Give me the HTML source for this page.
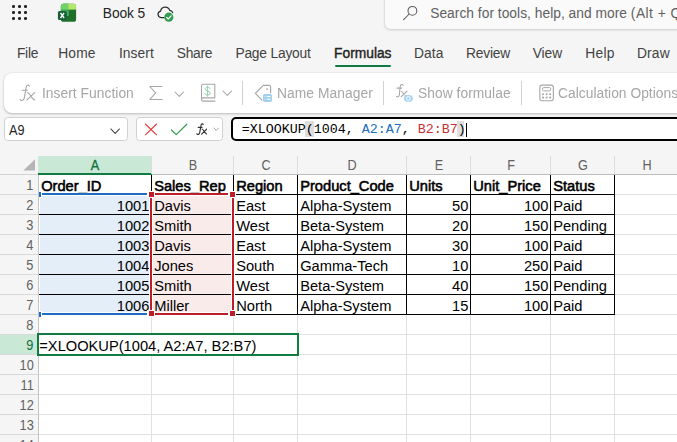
<!DOCTYPE html>
<html><head><meta charset="utf-8"><title>Book 5</title><style>
*{box-sizing:border-box;margin:0;padding:0}
html,body{width:677px;height:442px;overflow:hidden;background:#f5f5f5;font-family:"Liberation Sans",sans-serif;}
.a{position:absolute;white-space:pre;line-height:1}
.t{position:absolute;white-space:pre;line-height:1;font-size:13.5px;color:#242424}
.g{color:#a6a6a6}
.cell{position:absolute;white-space:pre;font-size:14.67px;line-height:1;color:#000;transform:scaleY(1.055);transform-origin:0 84.65%}
.b{-webkit-text-stroke:0.55px #000}
.hl{position:absolute;height:1px;background:#e1e1e1}
.vl{position:absolute;width:1px;background:#e1e1e1}
.bk{background:#000}
</style></head><body>
<div class="a" style="left:12.1px;top:5.2px;width:2.6px;height:2.6px;border-radius:50%;background:#242424"></div>
<div class="a" style="left:18.1px;top:5.2px;width:2.6px;height:2.6px;border-radius:50%;background:#242424"></div>
<div class="a" style="left:24.2px;top:5.2px;width:2.6px;height:2.6px;border-radius:50%;background:#242424"></div>
<div class="a" style="left:12.1px;top:11.2px;width:2.6px;height:2.6px;border-radius:50%;background:#242424"></div>
<div class="a" style="left:18.1px;top:11.2px;width:2.6px;height:2.6px;border-radius:50%;background:#242424"></div>
<div class="a" style="left:24.2px;top:11.2px;width:2.6px;height:2.6px;border-radius:50%;background:#242424"></div>
<div class="a" style="left:12.1px;top:17.2px;width:2.6px;height:2.6px;border-radius:50%;background:#242424"></div>
<div class="a" style="left:18.1px;top:17.2px;width:2.6px;height:2.6px;border-radius:50%;background:#242424"></div>
<div class="a" style="left:24.2px;top:17.2px;width:2.6px;height:2.6px;border-radius:50%;background:#242424"></div>
<svg class="a" style="left:57px;top:3px" width="21" height="20" viewBox="0 0 21 20">
<defs><clipPath id="xc"><rect x="3.9" y="0.8" width="15.2" height="18" rx="2.6"/></clipPath></defs>
<g clip-path="url(#xc)"><rect x="3" y="0" width="17" height="20" fill="#1f6e2b"/>
<rect x="3" y="0" width="8.8" height="13" fill="#3fae58"/>
<rect x="3" y="0" width="8.2" height="6.7" fill="#6fd166"/>
<rect x="11.2" y="0" width="9" height="6.7" fill="#b2e96d"/>
<rect x="3" y="6.7" width="17" height="0.6" fill="#2d8a43" opacity="0.5"/></g>
<rect x="0.9" y="7.9" width="8.9" height="9.1" rx="1.6" fill="#17603a"/>
<path d="M3.5 9.9l3.6 5.1M7.1 9.9l-3.6 5.1" stroke="#fff" stroke-width="1.35" fill="none"/>
</svg>
<div class="t" style="top:7.02px;font-size:13.8px;left:102.80px;letter-spacing:-0.092px;">Book 5</div>
<svg class="a" style="left:156px;top:3.7px" width="20" height="19" viewBox="0 0 20 19">
<path d="M8 13.6H5.1a3.3 3.3 0 0 1-.5-6.5 4.7 4.7 0 0 1 9.1-.7 3.1 3.1 0 0 1 3 2.2" fill="none" stroke="#2b2b2b" stroke-width="1.2" stroke-linecap="round"/>
<circle cx="12.8" cy="13.2" r="4.6" fill="#2f9e4f"/>
<path d="M10.6 13.4l1.6 1.6 2.9-3.2" fill="none" stroke="#fff" stroke-width="1.25" stroke-linecap="round" stroke-linejoin="round"/>
</svg>
<div class="a" style="left:385px;top:-10px;width:320px;height:38.5px;background:#fafafa;border-radius:5px;box-shadow:0 0 2px rgba(0,0,0,.18),0 1px 3px rgba(0,0,0,.12)"></div>
<svg class="a" style="left:403px;top:5px" width="16" height="16" viewBox="0 0 16 16"><circle cx="9.4" cy="5.8" r="4.4" fill="none" stroke="#5c5c5c" stroke-width="1.05"/><path d="M6.2 9L0.6 14.6" stroke="#5c5c5c" stroke-width="1.05" stroke-linecap="round"/></svg>
<div class="t" style="top:6.92px;font-size:13.8px;left:430.20px;color:#616161;letter-spacing:0.015px;">Search for tools, help, and more <span style="letter-spacing:0.45px">(Alt + Q)</span></div>
<div class="t" style="top:47.32px;font-size:13.8px;left:17.00px;color:#424242;letter-spacing:-0.305px;">File</div>
<div class="t" style="top:47.32px;font-size:13.8px;left:58.20px;color:#424242;letter-spacing:0.172px;">Home</div>
<div class="t" style="top:47.32px;font-size:13.8px;left:118.90px;color:#424242;letter-spacing:0.100px;">Insert</div>
<div class="t" style="top:47.32px;font-size:13.8px;left:176.70px;color:#424242;letter-spacing:-0.243px;">Share</div>
<div class="t" style="top:47.32px;font-size:13.8px;left:235.40px;color:#424242;letter-spacing:-0.197px;">Page Layout</div>
<div class="t" style="top:47.32px;font-size:13.8px;left:414.00px;color:#424242;letter-spacing:0.090px;">Data</div>
<div class="t" style="top:47.32px;font-size:13.8px;left:466.10px;color:#424242;letter-spacing:-0.208px;">Review</div>
<div class="t" style="top:47.32px;font-size:13.8px;left:532.70px;color:#424242;letter-spacing:-0.064px;">View</div>
<div class="t" style="top:47.32px;font-size:13.8px;left:585.30px;color:#424242;letter-spacing:0.256px;">Help</div>
<div class="t" style="top:47.32px;font-size:13.8px;left:636.90px;color:#424242;letter-spacing:0.174px;">Draw</div>
<div class="t" style="top:47.32px;font-size:13.8px;left:334.10px;color:#242424;letter-spacing:-0.013px;-webkit-text-stroke:0.4px #242424;">Formulas</div>
<div class="a" style="left:335px;top:65px;width:56px;height:2px;border-radius:1px;background:#107c41"></div>
<div class="a" style="left:4px;top:73px;width:700px;height:39.5px;background:#fff;border-radius:8px;box-shadow:0 0 2px rgba(0,0,0,.14),0 1px 2px rgba(0,0,0,.13),0 2px 3px rgba(0,0,0,.06)"></div>
<div class="t" style="top:87.02px;font-size:13.8px;left:41.60px;color:#a6a6a6;letter-spacing:0.038px;will-change:transform;">Insert Function</div>
<svg class="a" style="left:149px;top:85px" width="15" height="16" viewBox="0 0 15 16"><path d="M12.9 1.5H0.8l5.9 6.4-5.9 6.5H13.1" fill="none" stroke="#a6a6a6" stroke-width="1.05" stroke-linejoin="round" stroke-linecap="round"/></svg>
<svg class="a" style="left:173.8px;top:90.6px" width="10.6" height="6.4" viewBox="-1 -1 10.6 6.4"><path d="M0 0L4.3 4.4L8.6 0" fill="none" stroke="#a6a6a6" stroke-width="1.05" stroke-linecap="round" stroke-linejoin="round"/></svg>
<svg class="a" style="left:19px;top:84px" width="17.0" height="18.0" viewBox="0 0 17 18"><g fill="none" stroke="#a6a6a6" stroke-width="1.10" stroke-linecap="round" stroke-linejoin="round"><path d="M10.3 2.2C9.8 0.7 7.6 0.7 7.2 3.2L5.3 13.8C4.9 16.4 2.6 17.2 1.2 15.6"/><path d="M3.2 6.3H8.6"/><path d="M8.6 8.6C10.5 8.8 13.5 15.8 15.6 15.9M15.7 8.6L8 15.9"/></g></svg>
<svg class="a" style="left:200px;top:83px" width="17" height="20" viewBox="0 0 17 20">
<path d="M1.5 15.6V2.9A1.6 1.6 0 0 1 3.1 1.3H14.8V14.9H3.2a1.6 1.6 0 0 0-1.7 1.6v0a1.6 1.6 0 0 0 1.7 1.6H15" fill="none" stroke="#a6a6a6" stroke-width="1.1" stroke-linejoin="round" stroke-linecap="round"/>
<path transform="translate(-0.7,0)" d="M8.3 2.9V13.3M10.9 5.4C10.5 3.9 5.8 3.6 5.8 6.1C5.8 8.3 11 7.7 11 10.2C11 12.6 6.1 12.5 5.5 10.8" fill="none" stroke="#93d3aa" stroke-width="1" stroke-linecap="round"/></svg>
<svg class="a" style="left:222.2px;top:90.4px" width="10.6" height="6.4" viewBox="-1 -1 10.6 6.4"><path d="M0 0L4.3 4.4L8.6 0" fill="none" stroke="#a6a6a6" stroke-width="1.05" stroke-linecap="round" stroke-linejoin="round"/></svg>
<div class="a" style="left:242px;top:81px;width:1px;height:24px;background:#d1d1d1"></div>
<svg class="a" style="left:254px;top:83px" width="20" height="20" viewBox="0 0 20 20">
<path d="M16.6 9.6V3.9A1.5 1.5 0 0 0 15.1 2.4H9.2L1.4 10.4 7.9 17.1" fill="none" stroke="#a6a6a6" stroke-width="1.15" stroke-linejoin="round" stroke-linecap="round"/>
<rect x="12.3" y="5.3" width="1.5" height="1.5" fill="#a6a6a6"/>
<rect x="9" y="11" width="9" height="7.9" rx="1.7" fill="#9fd0f0"/>
<path d="M12.6 13.5h4M12.6 16.3h4" stroke="#fff" stroke-width="1.1"/><path d="M10.4 13.5h1M10.4 16.3h1" stroke="#d8ecfa" stroke-width="1.1"/></svg>
<div class="t" style="top:87.02px;font-size:13.8px;left:277.20px;color:#a6a6a6;letter-spacing:0.059px;will-change:transform;">Name Manager</div>
<div class="a" style="left:383px;top:81px;width:1px;height:24px;background:#d1d1d1"></div>
<svg class="a" style="left:395px;top:83px" width="20" height="20" viewBox="0 0 20 20"><g fill="none" stroke="#a6a6a6" stroke-width="1.05" stroke-linecap="round" stroke-linejoin="round"><path d="M8.1 2.3C7.6 1.1 5.5 1.1 5.2 3.2L4.4 11.4C4.2 13.8 2.6 14.3 1.5 13.5"/><path d="M1.9 5.1H6.7"/><path d="M6.4 8.4C7.6 8.5 10.2 13.4 11.7 13.5M12 8.1L6.1 13.8"/></g>
<ellipse cx="13.4" cy="15.4" rx="4.5" ry="3.4" fill="#a6d3f1"/><circle cx="13.4" cy="15.4" r="1.9" fill="none" stroke="#fff" stroke-width="0.95"/></svg>
<div class="t" style="top:87.02px;font-size:13.8px;left:417.80px;color:#a6a6a6;letter-spacing:0.045px;will-change:transform;">Show formulae</div>
<div class="a" style="left:521px;top:81px;width:1px;height:24px;background:#d1d1d1"></div>
<svg class="a" style="left:539px;top:84px" width="16" height="18" viewBox="0 0 16 18">
<rect x="0.85" y="1.1" width="13.5" height="15.6" rx="2.2" fill="none" stroke="#a6a6a6" stroke-width="1.1"/>
<rect x="3.5" y="3.6" width="8.2" height="3.3" rx="1.2" fill="none" stroke="#a6a6a6" stroke-width="1"/>
<g fill="#a6a6a6"><circle cx="4.0" cy="10.2" r="1.05"/><circle cx="7.6" cy="10.2" r="1.05"/><circle cx="11.2" cy="10.2" r="1.05"/>
<circle cx="4.0" cy="13.6" r="1.05"/><circle cx="7.6" cy="13.6" r="1.05"/><circle cx="11.2" cy="13.6" r="1.05"/></g></svg>
<div class="t" style="top:87.02px;font-size:13.8px;left:557.60px;color:#a6a6a6;letter-spacing:0.027px;will-change:transform;">Calculation Options</div>
<div class="a" style="left:4.3px;top:117px;width:123.4px;height:23.7px;background:#fff;border:1px solid #d1d1d1;border-radius:3.5px"></div>
<div class="t" style="top:122.75px;font-size:14px;left:8.90px;color:#242424;transform:scaleX(0.905);transform-origin:0 0;">A9</div>
<svg class="a" style="left:109.9px;top:127.9px" width="10.3" height="6.5" viewBox="-1 -1 10.3 6.5"><path d="M0 0L4.15 4.5L8.3 0" fill="none" stroke="#2b2b2b" stroke-width="1.1" stroke-linecap="round" stroke-linejoin="round"/></svg>
<div class="a" style="left:136.3px;top:117px;width:87.0px;height:23.7px;background:#fff;border:1px solid #d1d1d1;border-radius:3.5px"></div>
<svg class="a" style="left:144px;top:122.5px" width="14" height="13" viewBox="0 0 14 13"><path d="M1.4 1l11.2 10.8M12.6 1L1.4 11.8" stroke="#ee3036" stroke-width="1.05" stroke-linecap="round"/></svg>
<svg class="a" style="left:170px;top:122.6px" width="18" height="13" viewBox="0 0 18 13"><path d="M1.4 7l4.8 4.6L16.8 1.2" fill="none" stroke="#2d9d4a" stroke-width="1.2" stroke-linecap="round" stroke-linejoin="round"/></svg>
<svg class="a" style="left:195.6px;top:122.8px" width="11.9" height="12.6" viewBox="0 0 17 18"><g fill="none" stroke="#333" stroke-width="1.64" stroke-linecap="round" stroke-linejoin="round"><path d="M10.3 2.2C9.8 0.7 7.6 0.7 7.2 3.2L5.3 13.8C4.9 16.4 2.6 17.2 1.2 15.6"/><path d="M3.2 6.3H8.6"/><path d="M8.6 8.6C10.5 8.8 13.5 15.8 15.6 15.9M15.7 8.6L8 15.9"/></g></svg>
<svg class="a" style="left:212.6px;top:127.2px" width="6.6" height="4.4" viewBox="-1 -1 6.6 4.4"><path d="M0 0L2.3 2.4L4.6 0" fill="none" stroke="#a8a8a8" stroke-width="1" stroke-linecap="round" stroke-linejoin="round"/></svg>
<div class="a" style="left:231px;top:117px;width:470px;height:24px;background:#fff;border:2px solid #000;border-radius:5px"></div>
<div class="a" style="left:305.3px;top:121.3px;width:8.4px;height:15.7px;background:#dedede"></div>
<div class="a" style="left:457.3px;top:121.3px;width:6.8px;height:15.7px;background:#dedede"></div>
<div class="a" style="left:241.8px;top:123.48px;font-size:13.33px;color:#000;font-family:'Liberation Mono',monospace">=XLOOKUP(1004, <span style="color:#1b6ec2">A2:A7</span>, <span style="color:#c43238">B2:B7</span>)</div>
<div class="a" style="left:466px;top:122.5px;width:1px;height:14px;background:#000"></div>
<div class="a" style="left:39px;top:175px;width:640px;height:270px;background:#fff"></div>
<div class="a" style="left:38px;top:156px;width:114px;height:19px;background:#cae8d6"></div>
<div class="a" style="left:38px;top:173px;width:114px;height:2px;background:#107c41"></div>
<div class="a" style="left:0;top:174px;width:38px;height:1px;background:#d4d4d4"></div>
<div class="a" style="left:152px;top:174px;width:530px;height:1px;background:#bdbdbd"></div>
<div class="vl" style="left:151px;top:156px;height:18px;background:#dcdcdc"></div>
<div class="vl" style="left:233px;top:156px;height:18px;background:#dcdcdc"></div>
<div class="vl" style="left:297px;top:156px;height:18px;background:#dcdcdc"></div>
<div class="vl" style="left:406px;top:156px;height:18px;background:#dcdcdc"></div>
<div class="vl" style="left:470px;top:156px;height:18px;background:#dcdcdc"></div>
<div class="vl" style="left:550px;top:156px;height:18px;background:#dcdcdc"></div>
<div class="vl" style="left:614px;top:156px;height:18px;background:#dcdcdc"></div>
<div class="vl" style="left:678px;top:156px;height:18px;background:#dcdcdc"></div>
<svg class="a" style="left:23px;top:159px" width="12" height="12" viewBox="0 0 12 12"><path d="M12 0.3V11.6H0.4Z" fill="#b5b5b5"/></svg>
<div class="a" style="left:75.4px;width:40px;text-align:center;top:158.82px;font-size:13.33px;color:#0f703b;transform:scale(0.95,1.08);transform-origin:50% 84.65%;-webkit-text-stroke:0.3px #0f703b">A</div>
<div class="a" style="left:172.5px;width:40px;text-align:center;top:158.82px;font-size:13.33px;color:#616161;transform:scale(0.95,1.08);transform-origin:50% 84.65%">B</div>
<div class="a" style="left:245.5px;width:40px;text-align:center;top:158.82px;font-size:13.33px;color:#616161;transform:scale(0.95,1.08);transform-origin:50% 84.65%">C</div>
<div class="a" style="left:332.0px;width:40px;text-align:center;top:158.82px;font-size:13.33px;color:#616161;transform:scale(0.95,1.08);transform-origin:50% 84.65%">D</div>
<div class="a" style="left:418.5px;width:40px;text-align:center;top:158.82px;font-size:13.33px;color:#616161;transform:scale(0.95,1.08);transform-origin:50% 84.65%">E</div>
<div class="a" style="left:490.5px;width:40px;text-align:center;top:158.82px;font-size:13.33px;color:#616161;transform:scale(0.95,1.08);transform-origin:50% 84.65%">F</div>
<div class="a" style="left:562.5px;width:40px;text-align:center;top:158.82px;font-size:13.33px;color:#616161;transform:scale(0.95,1.08);transform-origin:50% 84.65%">G</div>
<div class="a" style="left:626.5px;width:40px;text-align:center;top:158.82px;font-size:13.33px;color:#616161;transform:scale(0.95,1.08);transform-origin:50% 84.65%">H</div>
<div class="vl" style="left:38px;top:175px;height:270px;background:#c4c4c4"></div>
<div class="a" style="left:0;top:334px;width:38px;height:21px;background:#cae8d6"></div>
<div class="hl" style="left:0;top:194px;width:38px;background:#d9d9d9"></div>
<div class="hl" style="left:39px;top:194px;width:640px"></div>
<div class="hl" style="left:0;top:214px;width:38px;background:#d9d9d9"></div>
<div class="hl" style="left:39px;top:214px;width:640px"></div>
<div class="hl" style="left:0;top:234px;width:38px;background:#d9d9d9"></div>
<div class="hl" style="left:39px;top:234px;width:640px"></div>
<div class="hl" style="left:0;top:254px;width:38px;background:#d9d9d9"></div>
<div class="hl" style="left:39px;top:254px;width:640px"></div>
<div class="hl" style="left:0;top:274px;width:38px;background:#d9d9d9"></div>
<div class="hl" style="left:39px;top:274px;width:640px"></div>
<div class="hl" style="left:0;top:294px;width:38px;background:#d9d9d9"></div>
<div class="hl" style="left:39px;top:294px;width:640px"></div>
<div class="hl" style="left:0;top:314px;width:38px;background:#d9d9d9"></div>
<div class="hl" style="left:39px;top:314px;width:640px"></div>
<div class="hl" style="left:0;top:334px;width:38px;background:#d9d9d9"></div>
<div class="hl" style="left:39px;top:334px;width:640px"></div>
<div class="hl" style="left:0;top:354px;width:38px;background:#d9d9d9"></div>
<div class="hl" style="left:39px;top:354px;width:640px"></div>
<div class="hl" style="left:0;top:374px;width:38px;background:#d9d9d9"></div>
<div class="hl" style="left:39px;top:374px;width:640px"></div>
<div class="hl" style="left:0;top:394px;width:38px;background:#d9d9d9"></div>
<div class="hl" style="left:39px;top:394px;width:640px"></div>
<div class="hl" style="left:0;top:414px;width:38px;background:#d9d9d9"></div>
<div class="hl" style="left:39px;top:414px;width:640px"></div>
<div class="hl" style="left:0;top:434px;width:38px;background:#d9d9d9"></div>
<div class="hl" style="left:39px;top:434px;width:640px"></div>
<div class="hl" style="left:0;top:454px;width:38px;background:#d9d9d9"></div>
<div class="hl" style="left:39px;top:454px;width:640px"></div>
<div class="vl" style="left:151px;top:175px;height:270px"></div>
<div class="vl" style="left:233px;top:175px;height:270px"></div>
<div class="vl" style="left:297px;top:175px;height:270px"></div>
<div class="vl" style="left:406px;top:175px;height:270px"></div>
<div class="vl" style="left:470px;top:175px;height:270px"></div>
<div class="vl" style="left:550px;top:175px;height:270px"></div>
<div class="vl" style="left:614px;top:175px;height:270px"></div>
<div class="vl" style="left:678px;top:175px;height:270px"></div>
<div class="a" style="right:643.1px;top:178.62px;font-size:13.33px;color:#616161;transform:scale(0.96,1.08);transform-origin:100% 84.65%">1</div>
<div class="a" style="right:643.1px;top:198.62px;font-size:13.33px;color:#616161;transform:scale(0.96,1.08);transform-origin:100% 84.65%">2</div>
<div class="a" style="right:643.1px;top:218.62px;font-size:13.33px;color:#616161;transform:scale(0.96,1.08);transform-origin:100% 84.65%">3</div>
<div class="a" style="right:643.1px;top:238.62px;font-size:13.33px;color:#616161;transform:scale(0.96,1.08);transform-origin:100% 84.65%">4</div>
<div class="a" style="right:643.1px;top:258.62px;font-size:13.33px;color:#616161;transform:scale(0.96,1.08);transform-origin:100% 84.65%">5</div>
<div class="a" style="right:643.1px;top:278.62px;font-size:13.33px;color:#616161;transform:scale(0.96,1.08);transform-origin:100% 84.65%">6</div>
<div class="a" style="right:643.1px;top:298.62px;font-size:13.33px;color:#616161;transform:scale(0.96,1.08);transform-origin:100% 84.65%">7</div>
<div class="a" style="right:643.1px;top:318.62px;font-size:13.33px;color:#616161;transform:scale(0.96,1.08);transform-origin:100% 84.65%">8</div>
<div class="a" style="right:643.1px;top:338.62px;font-size:13.33px;color:#0f703b;transform:scale(0.96,1.08);transform-origin:100% 84.65%">9</div>
<div class="a" style="right:643.1px;top:358.62px;font-size:13.33px;color:#616161;transform:scale(0.96,1.08);transform-origin:100% 84.65%">10</div>
<div class="a" style="right:643.1px;top:378.62px;font-size:13.33px;color:#616161;transform:scale(0.96,1.08);transform-origin:100% 84.65%">11</div>
<div class="a" style="right:643.1px;top:398.62px;font-size:13.33px;color:#616161;transform:scale(0.96,1.08);transform-origin:100% 84.65%">12</div>
<div class="a" style="right:643.1px;top:418.62px;font-size:13.33px;color:#616161;transform:scale(0.96,1.08);transform-origin:100% 84.65%">13</div>
<div class="a" style="right:643.1px;top:438.62px;font-size:13.33px;color:#616161;transform:scale(0.96,1.08);transform-origin:100% 84.65%">14</div>
<div class="a" style="left:40px;top:196px;width:109px;height:116px;background:#e3eef8"></div>
<div class="a" style="left:153px;top:196px;width:77.5px;height:116px;background:#f9ebea"></div>
<div class="hl bk" style="left:39px;top:194px;width:576px"></div>
<div class="hl bk" style="left:39px;top:214px;width:576px"></div>
<div class="hl bk" style="left:39px;top:234px;width:576px"></div>
<div class="hl bk" style="left:39px;top:254px;width:576px"></div>
<div class="hl bk" style="left:39px;top:274px;width:576px"></div>
<div class="hl bk" style="left:39px;top:294px;width:576px"></div>
<div class="hl bk" style="left:39px;top:314px;width:576px"></div>
<div class="vl bk" style="left:151px;top:175px;height:140px"></div>
<div class="vl bk" style="left:233px;top:175px;height:140px"></div>
<div class="vl bk" style="left:297px;top:175px;height:140px"></div>
<div class="vl bk" style="left:406px;top:175px;height:140px"></div>
<div class="vl bk" style="left:470px;top:175px;height:140px"></div>
<div class="vl bk" style="left:550px;top:175px;height:140px"></div>
<div class="vl bk" style="left:614px;top:175px;height:140px"></div>
<div class="cell b" style="left:41.2px;top:178.73px">Order_ID</div>
<div class="cell b" style="left:154.2px;top:178.73px">Sales_Rep</div>
<div class="cell b" style="left:236.2px;top:178.73px">Region</div>
<div class="cell b" style="left:300.2px;top:178.73px">Product_Code</div>
<div class="cell b" style="left:409.2px;top:178.73px">Units</div>
<div class="cell b" style="left:473.2px;top:178.73px">Unit_Price</div>
<div class="cell b" style="left:553.2px;top:178.73px">Status</div>
<div class="cell" style="right:527.6px;top:198.73px">1001</div>
<div class="cell" style="left:154.2px;top:198.73px">Davis</div>
<div class="cell" style="left:236.2px;top:198.73px">East</div>
<div class="cell" style="left:300.2px;top:198.73px">Alpha-System</div>
<div class="cell" style="right:208.6px;top:198.73px">50</div>
<div class="cell" style="right:128.6px;top:198.73px">100</div>
<div class="cell" style="left:553.2px;top:198.73px">Paid</div>
<div class="cell" style="right:527.6px;top:218.73px">1002</div>
<div class="cell" style="left:154.2px;top:218.73px">Smith</div>
<div class="cell" style="left:236.2px;top:218.73px">West</div>
<div class="cell" style="left:300.2px;top:218.73px">Beta-System</div>
<div class="cell" style="right:208.6px;top:218.73px">20</div>
<div class="cell" style="right:128.6px;top:218.73px">150</div>
<div class="cell" style="left:553.2px;top:218.73px">Pending</div>
<div class="cell" style="right:527.6px;top:238.73px">1003</div>
<div class="cell" style="left:154.2px;top:238.73px">Davis</div>
<div class="cell" style="left:236.2px;top:238.73px">East</div>
<div class="cell" style="left:300.2px;top:238.73px">Alpha-System</div>
<div class="cell" style="right:208.6px;top:238.73px">30</div>
<div class="cell" style="right:128.6px;top:238.73px">100</div>
<div class="cell" style="left:553.2px;top:238.73px">Paid</div>
<div class="cell" style="right:527.6px;top:258.73px">1004</div>
<div class="cell" style="left:154.2px;top:258.73px">Jones</div>
<div class="cell" style="left:236.2px;top:258.73px">South</div>
<div class="cell" style="left:300.2px;top:258.73px">Gamma-Tech</div>
<div class="cell" style="right:208.6px;top:258.73px">10</div>
<div class="cell" style="right:128.6px;top:258.73px">250</div>
<div class="cell" style="left:553.2px;top:258.73px">Paid</div>
<div class="cell" style="right:527.6px;top:278.73px">1005</div>
<div class="cell" style="left:154.2px;top:278.73px">Smith</div>
<div class="cell" style="left:236.2px;top:278.73px">West</div>
<div class="cell" style="left:300.2px;top:278.73px">Beta-System</div>
<div class="cell" style="right:208.6px;top:278.73px">40</div>
<div class="cell" style="right:128.6px;top:278.73px">150</div>
<div class="cell" style="left:553.2px;top:278.73px">Pending</div>
<div class="cell" style="right:527.6px;top:298.73px">1006</div>
<div class="cell" style="left:154.2px;top:298.73px">Miller</div>
<div class="cell" style="left:236.2px;top:298.73px">North</div>
<div class="cell" style="left:300.2px;top:298.73px">Alpha-System</div>
<div class="cell" style="right:208.6px;top:298.73px">15</div>
<div class="cell" style="right:128.6px;top:298.73px">100</div>
<div class="cell" style="left:553.2px;top:298.73px">Paid</div>
<div class="a" style="left:42px;top:193px;width:105px;height:2px;background:#1b6ec2"></div>
<div class="a" style="left:42px;top:313px;width:105px;height:2px;background:#1b6ec2"></div>
<div class="a" style="left:39px;top:191px;width:3px;height:7px;background:#fff"></div>
<div class="a" style="left:39px;top:192px;width:2px;height:5px;background:#1b6ec2"></div>
<div class="a" style="left:39px;top:311px;width:3px;height:7px;background:#fff"></div>
<div class="a" style="left:39px;top:312px;width:2px;height:5px;background:#1b6ec2"></div>
<div class="a" style="left:149px;top:195px;width:1px;height:118px;background:#fff"></div>
<div class="a" style="left:152px;top:195px;width:1px;height:118px;background:#fff"></div>
<div class="a" style="left:231px;top:195px;width:1px;height:118px;background:#fff"></div>
<div class="a" style="left:234px;top:195px;width:1px;height:118px;background:#fff"></div>
<div class="a" style="left:42px;top:195px;width:192px;height:1px;background:#fff"></div>
<div class="a" style="left:42px;top:312px;width:192px;height:1px;background:#fff"></div>
<div class="a" style="left:150px;top:193px;width:2px;height:122px;background:#be1e28"></div>
<div class="a" style="left:232px;top:193px;width:2px;height:122px;background:#be1e28"></div>
<div class="a" style="left:150px;top:193px;width:84px;height:2px;background:#be1e28"></div>
<div class="a" style="left:150px;top:313px;width:84px;height:2px;background:#be1e28"></div>
<div class="a" style="left:147px;top:191px;width:8px;height:7px;background:#fff"></div>
<div class="a" style="left:149px;top:192px;width:5px;height:5px;background:#be1e28"></div>
<div class="a" style="left:147px;top:310px;width:8px;height:7px;background:#fff"></div>
<div class="a" style="left:149px;top:311px;width:5px;height:5px;background:#be1e28"></div>
<div class="a" style="left:228px;top:191px;width:8px;height:7px;background:#fff"></div>
<div class="a" style="left:230px;top:192px;width:5px;height:5px;background:#be1e28"></div>
<div class="a" style="left:228px;top:310px;width:8px;height:7px;background:#fff"></div>
<div class="a" style="left:230px;top:311px;width:5px;height:5px;background:#be1e28"></div>
<div class="a" style="left:37px;top:333px;width:262px;height:23px;background:#fff;border:2px solid #107c41"></div>
<div class="cell" style="left:39.3px;top:338.53px">=XLOOKUP(1004, A2:A7, B2:B7)</div>
</body></html>
